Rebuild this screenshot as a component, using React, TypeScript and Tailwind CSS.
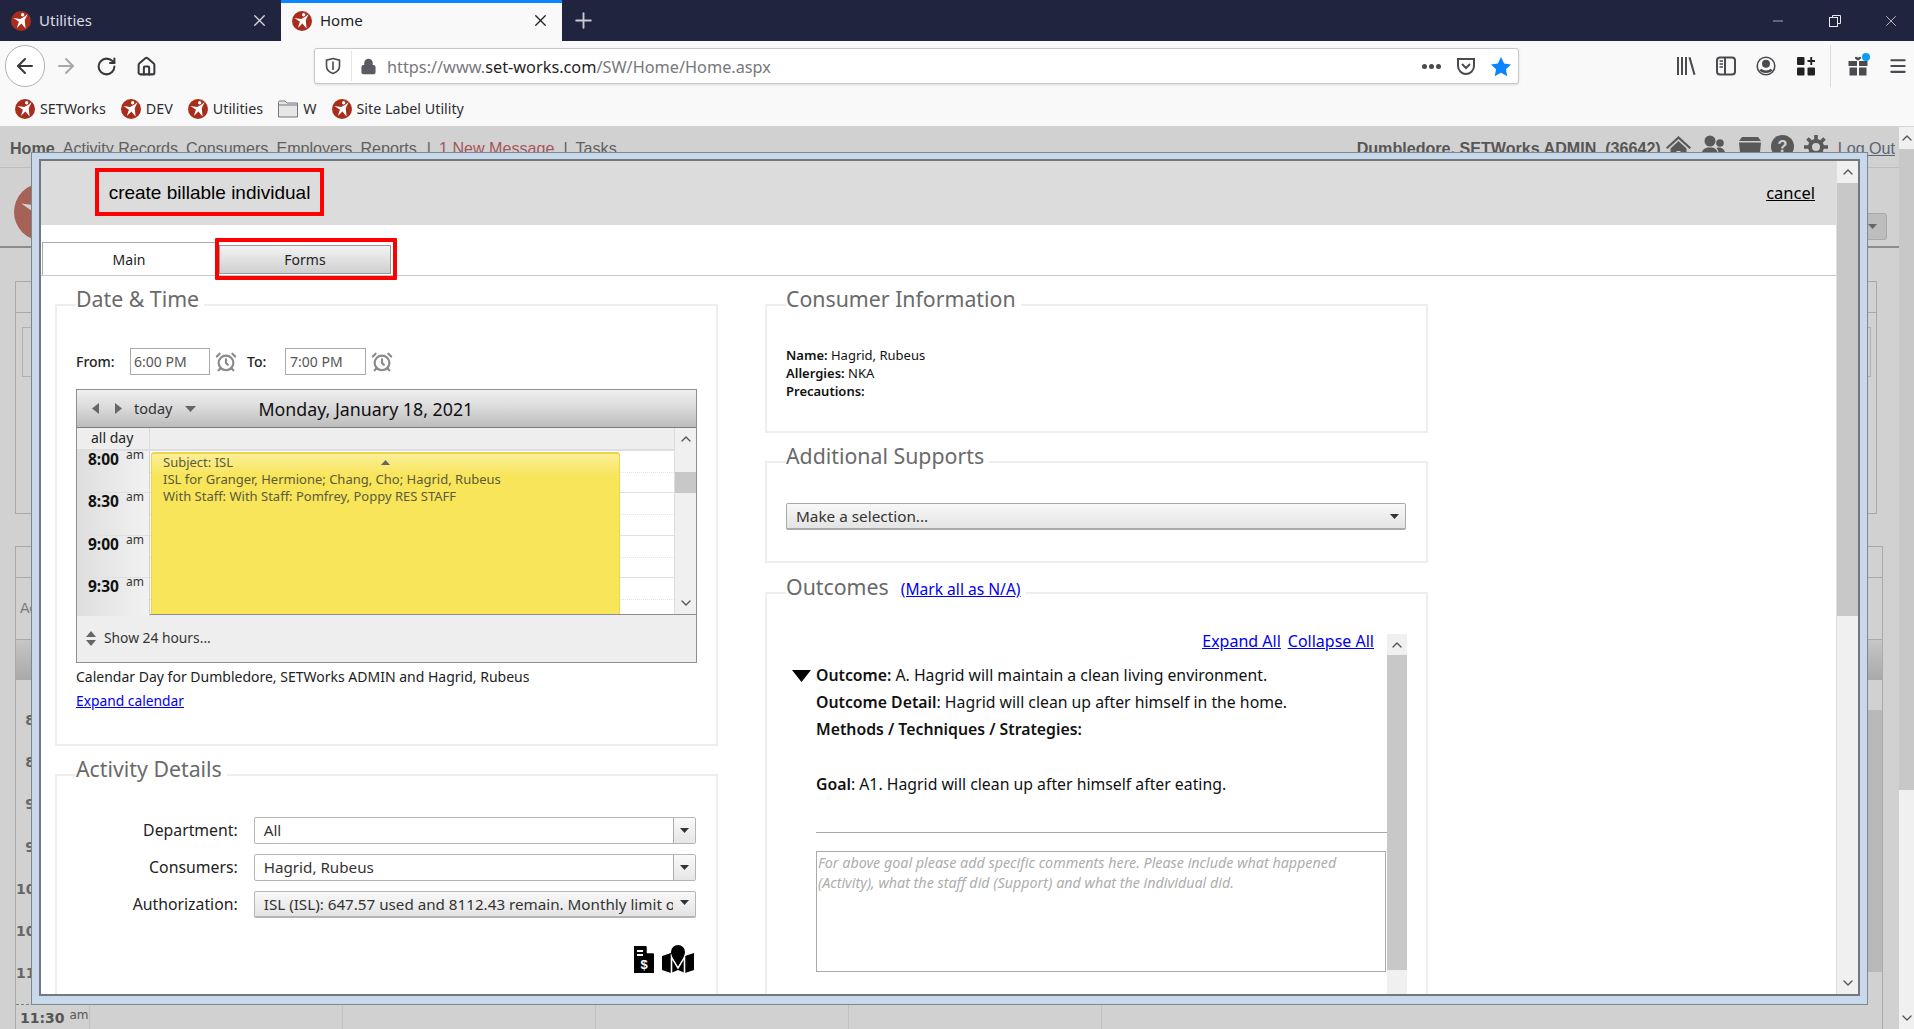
import { AlarmClock, ArrowLeft, ArrowRight, ChevronDown, ChevronUp, House, Lock, Menu, Minus, Plus, RotateCw, X } from "lucide-react"

const SANS = "font-['Noto_Sans',sans-serif]"

function Logo({ size = 20, disc = "#a82d1d", star = "#ffffff" }: { size?: number; disc?: string; star?: string }) {
  return (
    <svg width={size} height={size} viewBox="0 0 24 24" className="shrink-0">
      <circle cx="12" cy="12" r="12" fill={disc} />
      <path d="M3 8.5 11 9.5 16 7 20 3.5 16.5 11 17.5 21 12.5 15 7 20.5 9.5 13Z" fill={star} />
      <circle cx="14" cy="4.5" r="2" fill={star} />
    </svg>
  )
}

function Triangle({ dir = "down", color = "#555", w = 9, h = 5 }: { dir?: "down" | "up" | "left" | "right"; color?: string; w?: number; h?: number }) {
  const points = { down: "0,0 10,0 5,10", up: "0,10 10,10 5,0", left: "10,0 10,10 0,5", right: "0,0 0,10 10,5" }[dir]
  return (
    <svg width={w} height={h} viewBox="0 0 10 10" preserveAspectRatio="none" className="shrink-0">
      <polygon points={points} fill={color} />
    </svg>
  )
}

function Tab({ title, active }: { title: string; active?: boolean }) {
  return (
    <div className={`w-[281px] h-[41px] flex items-center pl-[11px] pr-[12px] ${active ? "bg-[#f9f9fa] border-t-[3px] border-[#0a84ff] pb-[3px] text-[#222]" : "text-[#dcdde3]"}`}>
      <Logo />
      <span className="ml-2 text-[15px] flex-1">{title}</span>
      <X size={19} strokeWidth={1.7} className={active ? "text-[#222]" : "text-[#d5d6dd]"} />
    </div>
  )
}

function TitleBar() {
  return (
    <div className={`h-[41px] bg-[#20243f] flex items-center ${SANS}`}>
      <Tab title="Utilities" />
      <Tab title="Home" active />
      <Plus size={25} strokeWidth={1.8} className="ml-[9px] text-[#c9cad3]" />
      <div className="ml-auto flex items-center text-[#e8e8ec]">
        <Minus size={16} strokeWidth={1} />
        <svg width="14" height="14" viewBox="0 0 14 14" fill="none" stroke="currentColor" className="ml-[42px]">
          <rect x="1.5" y="3.5" width="8" height="9" />
          <path d="M4.5 3.5V1.5H12.5V9.5H9.5" />
        </svg>
        <X size={18} strokeWidth={1} className="ml-[40px] mr-[14px]" />
      </div>
    </div>
  )
}

function NavBar() {
  return (
    <div className={`h-[50px] flex items-center text-[#38383d] ${SANS}`}>
      <div className="ml-[5px] w-[40px] h-[42px] rounded-full border border-[#b1b1b3] bg-white flex items-center justify-center">
        <ArrowLeft size={24} strokeWidth={2} />
      </div>
      <ArrowRight size={24} strokeWidth={2} className="ml-[9px] text-[#a9a9ac]" />
      <RotateCw size={21} strokeWidth={2.3} className="ml-[18px]" />
      <House size={21} strokeWidth={2.3} className="ml-[19px]" />
      <div className="ml-[157px] w-[1205px] h-[36px] bg-white border border-[#c8c8ca] rounded-[3px] flex items-center shadow-sm">
        <svg width="16" height="18" viewBox="0 0 16 18" fill="none" stroke="#4a4a4f" strokeWidth="1.6" className="ml-[10px]">
          <path d="M8 1.5 14.5 3.2V9C14.5 13 11 15.5 8 16.5 5 15.5 1.5 13 1.5 9V3.2Z" />
          <path d="M8 4.500V13" />
        </svg>
        <div className="ml-[10px] w-px h-[30px] bg-[#e4e4e6]" />
        <Lock size={17} fill="#5b5b66" strokeWidth={2} className="ml-[8px] text-[#5b5b66]" />
        <span className="ml-[10px] mt-[2px] text-[16.3px] text-[#77777c]">
          https://www.<span className="text-[#1f1f24]">set-works.com</span>/SW/Home/Home.aspx
        </span>
        <div className="ml-auto flex items-center gap-[2px] text-[#4a4a4f]">
          <span className="w-[5px] h-[5px] rounded-full bg-current" />
          <span className="w-[5px] h-[5px] rounded-full bg-current" />
          <span className="w-[5px] h-[5px] rounded-full bg-current" />
        </div>
        <svg width="20" height="19" viewBox="0 0 20 19" fill="none" stroke="#4a4a4f" strokeWidth="2" className="ml-[15px]">
          <path d="M2 2H18V9C18 13.5 14 17 10 17S2 13.5 2 9Z" />
          <path d="M6 7 10 11 14 7" />
        </svg>
        <svg width="22" height="21" viewBox="0 0 24 24" fill="#0a84ff" className="ml-[14px] mr-[6px]">
          <path d="M12 1 15.6 8.6 23.5 9.6 17.6 15.2 19.2 23 12 19 4.8 23 6.4 15.2.5 9.6 8.4 8.6Z" />
        </svg>
      </div>
      <div className="ml-[157px] flex items-center">
        <svg width="20" height="20" viewBox="0 0 20 20" fill="#4a4a4f">
          <rect x="1" y="1" width="2" height="18" />
          <rect x="5" y="1" width="2" height="18" />
          <rect x="9" y="1" width="2" height="18" />
          <path d="M12.5 1.5 14.5 1 19.5 18.5 17.5 19Z" />
        </svg>
        <svg width="20" height="20" viewBox="0 0 20 20" fill="none" stroke="#4a4a4f" strokeWidth="2" className="ml-[20px]">
          <rect x="1" y="1.5" width="18" height="17" rx="3" />
          <path d="M9 2V18" />
          <path d="M3.5 5H7M3.5 8H7M3.500 11H7" strokeWidth="1.3" />
        </svg>
        <svg width="20" height="20" viewBox="0 0 20 20" fill="none" stroke="#4a4a4f" strokeWidth="1.6" className="ml-[20px]">
          <circle cx="10" cy="10" r="8.8" />
          <circle cx="10" cy="7.8" r="3.2" fill="#4a4a4f" />
          <path d="M4.5 13.5C6.5 16.5 13.5 16.5 15.5 13.5" strokeWidth="2.4" />
        </svg>
        <svg width="20" height="20" viewBox="0 0 20 20" fill="#222" className="ml-[20px]">
          <rect x="1" y="1" width="7.5" height="8" rx="1" />
          <rect x="1" y="11.5" width="7.5" height="8" rx="1" />
          <rect x="11.5" y="11.5" width="7.5" height="8" rx="1" />
          <path d="M14.3 1H16.2V4H19V6H16.2V9H14.3V6H11.5V4H14.3Z" />
        </svg>
        <div className="ml-[14px] w-px h-[42px] bg-[#dcdcde]" />
        <div className="relative ml-[17px]">
          <svg width="20" height="20" viewBox="0 0 20 20" fill="#4a4a4f">
            <rect x="0.5" y="5" width="8.5" height="5" />
            <rect x="11" y="5" width="8.5" height="5" />
            <rect x="1.5" y="11.5" width="7.5" height="8" />
            <rect x="11" y="11.5" width="7.5" height="8" />
            <path d="M10 4.5C7 3.5 6 1 8 .8 9 .7 10 2 10 2S11 .7 12 .8C14 1 13 3.5 10 4.5Z" />
          </svg>
          <span className="absolute -top-[3px] left-[14px] w-[8px] h-[8px] rounded-full bg-[#0a9cf0]" />
        </div>
        <Menu size={20} strokeWidth={2.5} className="ml-[20px] text-[#4a4a4f]" />
      </div>
    </div>
  )
}

function Bookmark({ label }: { label: string }) {
  return (
    <div className="flex items-center gap-[5px]">
      <Logo />
      <span>{label}</span>
    </div>
  )
}

function Bookmarks() {
  return (
    <div className={`h-[35px] pt-[1px] pl-[15px] flex items-center gap-[15px] text-[14.3px] text-[#2d2d31] ${SANS}`}>
      <Bookmark label="SETWorks" />
      <Bookmark label="DEV" />
      <Bookmark label="Utilities" />
      <div className="flex items-center gap-[5px]">
        <svg width="20" height="18" viewBox="0 0 20 18" fill="#e6e6e6" stroke="#77777c">
          <path d="M.5 2.5C.5 1.5 1 1 2 1H7L9 3H19.5V17H.5Z" />
          <path d="M.5 5H19.5" />
        </svg>
        <span>W</span>
      </div>
      <Bookmark label="Site Label Utility" />
    </div>
  )
}

function DimPageHeader() {
  return (
    <>
      <div className="h-[41px] border-b border-[#bdbdbd] pl-[10px] pr-[4px] pt-[10px] flex items-start text-[16.1px] leading-[22px] text-[#606060] font-['Liberation_Sans',sans-serif]">
        <span className="font-bold text-[#565656]">Home</span>
        <div className="ml-[8px] flex gap-[8px] underline underline-offset-1">
          <span>Activity Records</span>
          <span>Consumers</span>
          <span>Employers</span>
          <span>Reports</span>
        </div>
        <span className="ml-[10px]">|</span>
        <span className="ml-[8px] underline underline-offset-1 text-[#a5565a]">1 New Message</span>
        <span className="ml-[9px]">|</span>
        <span className="ml-[8px] underline underline-offset-1">Tasks</span>
        <span className="ml-auto font-bold text-[#565656]">Dumbledore, SETWorks ADMIN&nbsp; (36642)</span>
        <div className="ml-[5px] -mt-[2px] flex items-start gap-[10px] text-[#595959]">
          <svg width="25" height="22" viewBox="0 0 25 22" fill="currentColor">
            <path d="M12.5 1 0 12.5 1.5 14 12.5 4 23.5 14 25 12.5Z" />
            <path d="M4.500 13.5 12.5 6 20.5 13.5V22H14.5V16H10.5V22H4.500Z" />
          </svg>
          <svg width="25" height="23" viewBox="0 0 25 23" fill="currentColor">
            <circle cx="9" cy="6" r="5.500" />
            <path d="M0 23C0 15 3 12.500 9 12.500S17 15 17 23Z" />
            <circle cx="19" cy="8" r="3.800" />
            <path d="M18 23C18 18 17 14.500 15.500 13 18 12 25 12 25 23Z" />
          </svg>
          <svg width="24" height="22" viewBox="0 0 24 22" fill="currentColor" className="ml-[2px]">
            <path d="M4 2H20L23 6H1Z" />
            <path d="M1 7.5H23L21.5 22H2.5Z" />
          </svg>
          <svg width="23" height="23" viewBox="0 0 24 24" className="-ml-[1px]">
            <circle cx="12" cy="12" r="12" fill="currentColor" />
            <text x="12" y="18" textAnchor="middle" fontSize="17" fontWeight="bold" fill="#d1d1d1" fontFamily="Liberation Sans">?</text>
          </svg>
          <svg width="24" height="24" viewBox="0 0 24 24" fill="none" stroke="currentColor" strokeWidth="4">
            <circle cx="12" cy="12" r="6" />
            <path d="M12 0V5M12 19V24M0 12H5M19 12H24M3.5 3.5 7 7M17 17 20.5 20.5M3.5 20.5 7 17M17 7 20.5 3.5" strokeWidth="3.6" />
          </svg>
          <span className="mt-[2px] underline underline-offset-1 text-[#5b6472]">Log Out</span>
        </div>
      </div>
      <div className="h-[80px] border-b-2 border-[#8c8c8c] pl-[14px] pt-[15px] flex items-start">
        <Logo size={58} disc="#a76257" star="#d1d1d1" />
        <div className="ml-auto mt-[30px] mr-[12px] w-[40px] h-[27px] rounded-[3px] border border-[#a9a9a9] bg-[#bdbdbd] flex items-center justify-end pr-[9px]">
          <Triangle color="#666" />
        </div>
      </div>
    </>
  )
}

function DimPageBody() {
  const rows = ["8:00", "8:30", "9:00", "9:30", "10:00", "10:30", "11:00"]
  return (
    <div className="pl-[15px] pt-[33px] font-['DejaVu_Sans',sans-serif]">
      <div className="w-[1862px] h-[233px] border border-[#a9a9a9]">
        <div className="h-[31px] border-b border-[#a9a9a9]" />
        <div className="ml-[6px] mt-[14px] w-[1849px] h-[50px] border border-[#b1b1b1]" />
      </div>
      <div className="mt-[32px] w-[1868px] h-[500px] border border-[#a9a9a9] border-b-0">
        <div className="h-[31px] border-b border-[#a9a9a9]" />
        <div className="h-[62px] border-b border-[#a9a9a9] pt-[20px] pl-[4px] text-[14px] text-[#777]">Activity</div>
        <div className="h-[40px] bg-linear-to-b from-[#c6c6c6] to-[#a9a9a9]" />
        <div className="flex">
          <div className="flex-1 pt-[19px]">
            {rows.map((t) => (
              <div key={t} className="h-[42.3px] flex items-center text-[14px] font-bold text-[#666]">
                <span className="w-[44px] text-right">{t}</span>
              </div>
            ))}
            <div className="relative h-[42px] flex text-[#555]">
              <div className="absolute inset-x-0 top-[9px] border-t border-dashed border-[#6f8a6f]" />
              <div className="w-[73px] pt-[11px] pl-[4px] text-[14px] font-bold whitespace-nowrap">
                11:30 <span className="font-normal text-[12px] align-[4px]">am</span>
              </div>
              <div className="w-[253px] border-l border-[#c2c2c2]" />
              <div className="w-[253px] border-l border-[#c2c2c2]" />
              <div className="w-[253px] border-l border-[#c2c2c2]" />
              <div className="w-[253px] border-l border-[#c2c2c2]" />
              <div className="w-[253px] border-l border-[#c2c2c2]" />
            </div>
          </div>
          <div className="w-[20px] mt-[30px] bg-[#b9b9b9] h-[262px]" />
        </div>
      </div>
    </div>
  )
}

function VerticalBar({ top, height, className = "" }: { top: number; height: number; className?: string }) {
  return (
    <div className={`relative bg-[#f0f0f0] flex flex-col items-center justify-between text-[#555] ${className}`}>
      <ChevronUp size={16} strokeWidth={2} className="mt-[3px]" />
      <div className="absolute inset-x-0 bg-[#c8c8c8]" style={{ top, height }} />
      <ChevronDown size={16} strokeWidth={2} className="mb-[3px]" />
    </div>
  )
}

function Fieldset({ title, extra, className, children }: { title: string; extra?: React.ReactNode; className: string; children: React.ReactNode }) {
  return (
    <div className={`relative border-2 border-[#eeeeee] ${className}`}>
      <div className="absolute left-[19px] -top-[22px] pr-[5px] h-[30px] bg-white flex items-baseline text-[21.3px] leading-[30px] text-[#6a6a6a]">
        {title}
        {extra}
      </div>
      {children}
    </div>
  )
}

function ComboBox({ value, shaded }: { value: string; shaded?: boolean }) {
  return (
    <div className={`w-[443px] h-[27px] rounded-[2px] border border-[#b5b5b5] flex items-center overflow-hidden text-[15.2px] text-[#333] ${shaded ? "bg-linear-to-b from-[#f8f8f8] to-[#e4e4e4] border-b-2" : "bg-white"}`}>
      <span className="pl-[9px] flex-1 whitespace-nowrap overflow-hidden">{value}</span>
      <div className={`w-[22px] h-full flex items-center justify-center shrink-0 ${shaded ? "pb-[3px]" : "border-l border-[#aaa] bg-linear-to-b from-[#fafafa] to-[#e6e6e6]"}`}>
        <Triangle color="#333" />
      </div>
    </div>
  )
}

function TimeRow({ time, h }: { time: string; h: string }) {
  return (
    <div className={`${h} flex border-t border-[#e0e0e0] first:border-t-0`}>
      <div className="w-[73px] bg-linear-to-r from-[#dedede] to-[#f2f2f2] border-r border-[#d0d0d0] flex items-start pl-[11px]">
        <span className="-mt-[1px] font-bold text-[15.5px] leading-[18px] text-[#111]">{time}</span>
        <span className="ml-[7px] -mt-[3px] text-[12px] leading-[14px] text-[#333]">am</span>
      </div>
      <div className="flex-1 pt-[21px]">
        <div className="border-t border-dotted border-[#e3e3e3]" />
      </div>
    </div>
  )
}

function Calendar() {
  return (
    <div className="mt-[14px] w-[621px] h-[274px] border border-[#8f8f8f] flex flex-col">
      <div className="h-[38px] bg-linear-to-b from-[#f0f0f0] via-[#d9d9d9] to-[#bcbcbc] border-b border-[#7d7d7d] flex items-center">
        <div className="ml-[15px]"><Triangle dir="left" color="#666" w={7} h={11} /></div>
        <div className="ml-[16px]"><Triangle dir="right" color="#666" w={7} h={11} /></div>
        <span className="ml-[12px] mt-[1px] text-[14.5px] text-[#333]">today</span>
        <div className="ml-[13px]"><Triangle color="#666" w={11} h={6} /></div>
        <span className="ml-[62px] mt-[1px] text-[17.8px] text-[#111]">Monday, January 18, 2021</span>
      </div>
      <div className="flex-1 flex min-h-0">
        <div className="relative flex-1 min-w-0">
          <div className="h-[22px] flex bg-[#eeeeee] border-b border-[#ddd] text-[14px] text-[#222]">
            <div className="w-[73px] pl-[14px] border-r border-[#d8d8d8] leading-[20px]">all day</div>
          </div>
          <TimeRow time="8:00" h="h-[42px]" />
          <TimeRow time="8:30" h="h-[43px]" />
          <TimeRow time="9:00" h="h-[42px]" />
          <TimeRow time="9:30" h="h-[39px]" />
          <div className="absolute left-[74px] top-[24px] w-[469px] bottom-0 bg-[linear-gradient(#fbef98,#f8e55a_22px)] border-t-2 border-x border-[#eed44a] rounded-t-[3px] text-[13px] text-[#5b5b3a]">
            <div className="h-[17px] pl-[11px] flex items-center">
              Subject: ISL
              <span className="ml-[148px]"><Triangle dir="up" color="#666" w={9} h={5} /></span>
            </div>
            <div className="pl-[11px] leading-[17px]">ISL for Granger, Hermione; Chang, Cho; Hagrid, Rubeus</div>
            <div className="pl-[11px] leading-[17px]">With Staff: With Staff: Pomfrey, Poppy RES STAFF</div>
          </div>
        </div>
        <VerticalBar top={44} height={21} className="w-[22px] border-l border-[#ddd]" />
      </div>
      <div className="h-[48px] bg-[#eeeeee] border-t border-[#8f8f8f] flex items-center pl-[9px] text-[13.8px] text-[#333]">
        <div className="flex flex-col gap-[3px]">
          <Triangle dir="up" color="#666" w={10} h={6} />
          <Triangle color="#666" w={10} h={6} />
        </div>
        <span className="ml-[8px]">Show 24 hours...</span>
      </div>
    </div>
  )
}

function DateTime() {
  return (
    <Fieldset title="Date &amp; Time" className="h-[442px] pt-[42px] pl-[19px] pr-[20px]">
      <div className="h-[27px] flex items-center text-[14px] text-[#222]">
        <span className="w-[54px] font-medium">From:</span>
        <div className="w-[80px] h-[27px] border border-[#aaa] pl-[3px] leading-[25px] text-[#555]">6:00 PM</div>
        <AlarmClock size={22} strokeWidth={2.4} className="ml-[5px] text-[#8b8b8b]" />
        <span className="ml-[10px] w-[38px] font-medium">To:</span>
        <div className="w-[81px] h-[27px] border border-[#aaa] pl-[4px] leading-[25px] text-[#555]">7:00 PM</div>
        <AlarmClock size={22} strokeWidth={2.4} className="ml-[5px] text-[#8b8b8b]" />
      </div>
      <Calendar />
      <p className="mt-[4px] text-[14px] leading-[20px] text-[#222]">Calendar Day for Dumbledore, SETWorks ADMIN and Hagrid, Rubeus</p>
      <a href="#" className="mt-[4px] block text-[13.8px] leading-[20px] text-[#0000ee] underline">Expand calendar</a>
    </Fieldset>
  )
}

function ActivityDetails() {
  const fields = [
    { label: "Department:", value: "All" },
    { label: "Consumers:", value: "Hagrid, Rubeus" },
    { label: "Authorization:", value: "ISL (ISL): 647.57 used and 8112.43 remain. Monthly limit of", shaded: true },
  ]
  return (
    <Fieldset title="Activity Details" className="mt-[28px] h-[240px] pt-[41px] pl-[19px] pr-[20px]">
      <div className="flex flex-col gap-[10px]">
        {fields.map((f) => (
          <div key={f.label} className="flex items-center text-[#222]">
            <span className="w-[162px] text-right mr-[16px] text-[15.8px]">{f.label}</span>
            <ComboBox value={f.value} shaded={f.shaded} />
          </div>
        ))}
      </div>
      <div className="mt-[27px] flex justify-end items-end gap-[8px] pr-[2px]">
        <svg width="20" height="27" viewBox="0 0 20 27">
          <path d="M0 0H12L20 8V27H0Z" fill="#000" />
          <path d="M13 0 20 7H13Z" fill="#fff" stroke="#fff" strokeWidth=".5" />
          <path d="M3 4H9V6H3ZM3 8H9V10H3Z" fill="#fff" />
          <text x="10" y="23" textAnchor="middle" fontSize="13" fontWeight="bold" fill="#fff" fontFamily="Liberation Sans">$</text>
        </svg>
        <svg width="32" height="28" viewBox="0 0 32 28">
          <path d="M0 11 9 8 23 11 32 8V25L23 28 16 25 9 28 0 25Z" fill="#000" />
          <path d="M9.500 9V28M9.500 12 16 23 22.500 12M22.500 9V28" fill="none" stroke="#fff" strokeWidth="1.6" />
          <path d="M16 0A7 7 0 0 1 23 7C23 11 19 16 16 21 13 16 9 11 9 7A7 7 0 0 1 16 0Z" fill="#000" />
        </svg>
      </div>
    </Fieldset>
  )
}

function ConsumerInfo() {
  return (
    <Fieldset title="Consumer Information" className="h-[129px] pt-[40px] px-[19px]">
      <div className="text-[13px] leading-[18px] text-[#111]">
        <div><b className="font-semibold">Name:</b> Hagrid, Rubeus</div>
        <div><b className="font-semibold">Allergies:</b> NKA</div>
        <div><b className="font-semibold">Precautions:</b></div>
      </div>
    </Fieldset>
  )
}

function AdditionalSupports() {
  return (
    <Fieldset title="Additional Supports" className="mt-[28px] h-[102px] pt-[40px] px-[19px]">
      <div className="w-[620px] h-[27px] rounded-[2px] border border-[#aaa] border-b-2 bg-linear-to-b from-[#f8f8f8] to-[#e4e4e4] flex items-center justify-between pl-[9px] pr-[6px] text-[15.3px] text-[#333]">
        <span className="mt-[1px]">Make a selection...</span>
        <Triangle color="#333" />
      </div>
    </Fieldset>
  )
}

function Outcomes() {
  return (
    <Fieldset
      title="Outcomes"
      extra={<a href="#" className="ml-[12px] text-[15.6px] text-[#0000ee] underline">(Mark all as N/A)</a>}
      className="mt-[29px] h-[420px] pt-[40px] pl-[19px] pr-[19px]"
    >
      <div className="flex h-[390px]">
        <div className="flex-1 min-w-0">
          <div className="-mt-[3px] pr-[13px] flex justify-end gap-[7px] text-[16px] leading-[20px] text-[#0000ee] underline">
            <a href="#">Expand All</a>
            <a href="#">Collapse All</a>
          </div>
          <div className="mt-[11px] pl-[30px] text-[15.8px] leading-[27px] text-[#111]">
            <div className="relative">
              <span className="absolute -left-[24px] top-[8px]"><Triangle color="#000" w={19} h={12} /></span>
              <b className="font-semibold">Outcome:</b> A. Hagrid will maintain a clean living environment.
            </div>
            <div><b className="font-semibold">Outcome Detail</b>: Hagrid will clean up after himself in the home.</div>
            <div><b className="font-semibold">Methods / Techniques / Strategies:</b></div>
            <div className="mt-[28px]"><b className="font-semibold">Goal</b>: A1. Hagrid will clean up after himself after eating.</div>
            <div className="mt-[34px] border-t border-[#a9a9a9]" />
            <div className="mt-[18px] h-[121px] mr-[1px] border border-[#a9a9a9] pl-[1px] pt-[1px] text-[14.3px] leading-[20px] italic text-[#adadad]">
              For above goal please add specific comments here. Please include what happened (Activity), what the staff did (Support) and what the individual did.
            </div>
          </div>
        </div>
        <VerticalBar top={21} height={315} className="w-[20px]" />
      </div>
    </Fieldset>
  )
}

function Modal() {
  return (
    <div className={`absolute left-[31px] top-[152px] w-[1837px] h-[853px] border border-[#7d8790] bg-[#c9d9ec] pl-[7px] pr-[7px] pt-[6px] pb-[8px] ${SANS}`}>
      <div className="h-full border-2 border-[#707880] bg-white flex">
        <div className="flex-1 min-w-0 overflow-hidden">
          <div className="h-[64px] bg-[#dcdcdc] pl-[54px] pr-[21px] flex items-center justify-between">
            <div className="-mt-[3px] w-[229px] h-[48px] pt-[3px] border-4 border-[#ff0000] flex items-center justify-center font-['Liberation_Sans',sans-serif] text-[19px] text-black">
              create billable individual
            </div>
            <a href="#" className="mt-[1px] text-[16.5px] text-black underline">cancel</a>
          </div>
          <div className="h-[51px] pt-[17px] flex items-end border-b border-[#c8c8c8] text-[14px] text-[#222]">
            <div className="ml-[1px] w-[173px] h-[33px] border-t border-l border-[#aaa] flex items-center justify-center">Main</div>
            <div className="relative w-[182px] h-[33px] flex justify-end pr-[6px]">
              <div className="w-[172px] h-[29px] mt-[3px] border border-[#999] bg-linear-to-b from-[#f4f4f4] to-[#cfcfcf] flex items-center justify-center">Forms</div>
              <div className="absolute inset-x-0 -top-[4px] -bottom-[5px] border-4 border-[#ff0000] rounded-[1px]" />
            </div>
          </div>
          <div className="pt-[28px] pl-[14px] flex gap-[47px]">
            <div className="w-[663px] shrink-0">
              <DateTime />
              <ActivityDetails />
            </div>
            <div className="w-[663px] shrink-0">
              <ConsumerInfo />
              <AdditionalSupports />
              <Outcomes />
            </div>
          </div>
        </div>
        <VerticalBar top={22} height={433} className="w-[22px] border-l border-[#ddd]" />
      </div>
    </div>
  )
}

export default function App() {
  return (
    <div className="relative w-[1914px] h-[1029px] overflow-hidden bg-[#f9f9fa]">
      <TitleBar />
      <NavBar />
      <Bookmarks />
      <div className="flex h-[903px] border-t border-[#d4d4d4]">
        <div className="flex-1 min-w-0 bg-[#d1d1d1] overflow-hidden">
          <DimPageHeader />
          <DimPageBody />
        </div>
        <VerticalBar top={22} height={641} className="w-[15px]" />
      </div>
      <Modal />
    </div>
  )
}
